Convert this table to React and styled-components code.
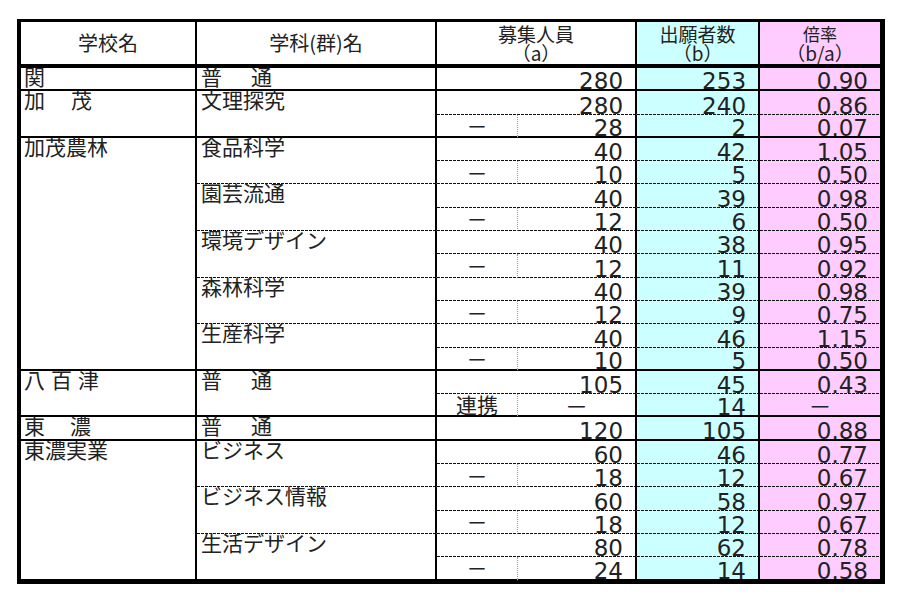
import styled, { createGlobalStyle, css } from 'styled-components';

const GlobalStyle = createGlobalStyle`
  * { box-sizing: border-box; }
  body {
    margin: 0;
    background: #fff;
    color: #222;
    font-family: "Noto Sans CJK JP", "Noto Sans", sans-serif;
  }
`;

const DASH = '－';
const CYAN = '#ccffff';
const PINK = '#ffccff';

const schools = [
  { name: '関', depts: [{ name: '普通', gap: 29, rows: [{ cap: 280, app: 253, rate: '0.90' }] }] },
  {
    name: '加茂', gap: 26,
    depts: [{ name: '文理探究', rows: [{ cap: 280, app: 240, rate: '0.86' }, { sub: DASH, cap: 28, app: 2, rate: '0.07' }] }],
  },
  {
    name: '加茂農林',
    depts: [
      { name: '食品科学', rows: [{ cap: 40, app: 42, rate: '1.05' }, { sub: DASH, cap: 10, app: 5, rate: '0.50' }] },
      { name: '園芸流通', rows: [{ cap: 40, app: 39, rate: '0.98' }, { sub: DASH, cap: 12, app: 6, rate: '0.50' }] },
      { name: '環境デザイン', rows: [{ cap: 40, app: 38, rate: '0.95' }, { sub: DASH, cap: 12, app: 11, rate: '0.92' }] },
      { name: '森林科学', rows: [{ cap: 40, app: 39, rate: '0.98' }, { sub: DASH, cap: 12, app: 9, rate: '0.75' }] },
      { name: '生産科学', rows: [{ cap: 40, app: 46, rate: '1.15' }, { sub: DASH, cap: 10, app: 5, rate: '0.50' }] },
    ],
  },
  {
    name: '八百津', gap: 6,
    depts: [{ name: '普通', gap: 29, rows: [{ cap: 105, app: 45, rate: '0.43' }, { sub: '連携', cap: DASH, app: 14, rate: DASH }] }],
  },
  { name: '東濃', gap: 25, depts: [{ name: '普通', gap: 29, rows: [{ cap: 120, app: 105, rate: '0.88' }] }] },
  {
    name: '東濃実業',
    depts: [
      { name: 'ビジネス', rows: [{ cap: 60, app: 46, rate: '0.77' }, { sub: DASH, cap: 18, app: 12, rate: '0.67' }] },
      { name: 'ビジネス情報', rows: [{ cap: 60, app: 58, rate: '0.97' }, { sub: DASH, cap: 18, app: 12, rate: '0.67' }] },
      { name: '生活デザイン', rows: [{ cap: 80, app: 62, rate: '0.78' }, { sub: DASH, cap: 24, app: 14, rate: '0.58' }] },
    ],
  },
];

const Page = styled.div`
  padding: 19px 0 0 17px;
`;

const Table = styled.table`
  width: 868px;
  table-layout: fixed;
  border-collapse: separate;
  border-spacing: 0;
  border-style: solid;
  border-color: #000;
  border-width: 3px 5px 3px 4px;
`;

const Col = styled.col`
  width: ${({ $w }) => $w}px;
`;

const HeadRow = styled.tr`
  height: 46px;
`;

const Row = styled.tr`
  height: 23.3px;
`;

// excel style hairline: short dashes with tiny gaps, darker than css dotted
const bottomLine = ({ $line }) => {
  if ($line === 'head') return css`border-bottom: 4px solid #000;`;
  if ($line === 'solid') return css`border-bottom: 2px solid #000;`;
  return css`
    border-bottom: 1px solid transparent;
    background-image: repeating-linear-gradient(90deg, #111 0 3px, transparent 3px 4px);
    background-size: 100% 1px;
    background-position: left bottom;
    background-repeat: no-repeat;
    background-origin: border-box;
  `;
};

const edges = css`
  padding: 0;
  background-color: ${({ $bg }) => $bg || '#fff'};
  border-right: ${({ $last }) => ($last ? 'none' : '2px solid #000')};
  ${bottomLine}
`;

const Head = styled.th`
  ${edges}
  font-weight: 400;
  font-size: 20px;
  line-height: 20px;
  text-align: center;
  vertical-align: middle;
  color: #222;
`;

const HeadLine = styled.div`
  font-size: ${({ $size }) => $size}px;
  line-height: 19px;
  white-space: nowrap;
`;

const NameCell = styled.td`
  ${edges}
  padding-left: ${({ $pad }) => $pad}px;
  font-size: 21px;
  line-height: 17px;
  vertical-align: top;
  white-space: nowrap;
  color: #222;
`;

const Spaced = styled.span`
  letter-spacing: ${({ $gap }) => $gap || 0}px;
`;

const SubCell = styled.td`
  ${edges}
  border-right: 1px dotted #9a9a9a;
  font-size: 21px;
  line-height: 21px;
  text-align: center;
  vertical-align: middle;
  color: #222;
`;

const NumCell = styled.td`
  ${edges}
  padding-right: ${({ $center }) => ($center ? 0 : 12)}px;
  font-family: "DejaVu Sans", "Noto Sans CJK JP", sans-serif;
  font-size: 23px;
  line-height: 16px;
  text-align: ${({ $center }) => ($center ? 'center' : 'right')};
  vertical-align: bottom;
  color: #222;
`;

function DataRows() {
  const out = [];
  schools.forEach((school, si) => {
    const total = school.depts.reduce((n, d) => n + d.rows.length, 0);
    let first = true;
    school.depts.forEach((dept, di) => {
      const lastDept = di === school.depts.length - 1;
      dept.rows.forEach((row, ri) => {
        const line = lastDept && ri === dept.rows.length - 1 ? 'solid' : 'dotted';
        out.push(
          <Row key={`${si}-${di}-${ri}`}>
            {first && (
              <NameCell rowSpan={total} $line="solid" $pad={3}>
                <Spaced $gap={school.gap}>{school.name}</Spaced>
              </NameCell>
            )}
            {ri === 0 && (
              <NameCell rowSpan={dept.rows.length} $line={lastDept ? 'solid' : 'dotted'} $pad={4}>
                <Spaced $gap={dept.gap}>{dept.name}</Spaced>
              </NameCell>
            )}
            {row.sub ? (
              <>
                <SubCell $line={line}>{row.sub}</SubCell>
                <NumCell $line={line} $center={row.cap === DASH}>{row.cap}</NumCell>
              </>
            ) : (
              <NumCell colSpan={2} $line={line}>{row.cap}</NumCell>
            )}
            <NumCell $bg={CYAN} $line={line}>{row.app}</NumCell>
            <NumCell $bg={PINK} $line={line} $last $center={row.rate === DASH}>{row.rate}</NumCell>
          </Row>
        );
        first = false;
      });
    });
  });
  return out;
}

export default function App() {
  return (
    <Page>
      <GlobalStyle />
      <Table>
        <colgroup>
          <Col $w={176} />
          <Col $w={240} />
          <Col $w={81} />
          <Col $w={119} />
          <Col $w={123} />
          <Col $w={120} />
        </colgroup>
        <thead>
          <HeadRow>
            <Head $line="head">学校名</Head>
            <Head $line="head">学科(群)名</Head>
            <Head $line="head" colSpan={2}>
              <HeadLine $size={19}>募集人員</HeadLine>
              <HeadLine $size={19}>（a）</HeadLine>
            </Head>
            <Head $line="head" $bg={CYAN}>
              <HeadLine $size={19}>出願者数</HeadLine>
              <HeadLine $size={19}>（b）</HeadLine>
            </Head>
            <Head $line="head" $bg={PINK} $last>
              <HeadLine $size={17}>倍率</HeadLine>
              <HeadLine $size={19}>（b/a）</HeadLine>
            </Head>
          </HeadRow>
        </thead>
        <tbody>
          <DataRows />
        </tbody>
      </Table>
    </Page>
  );
}
